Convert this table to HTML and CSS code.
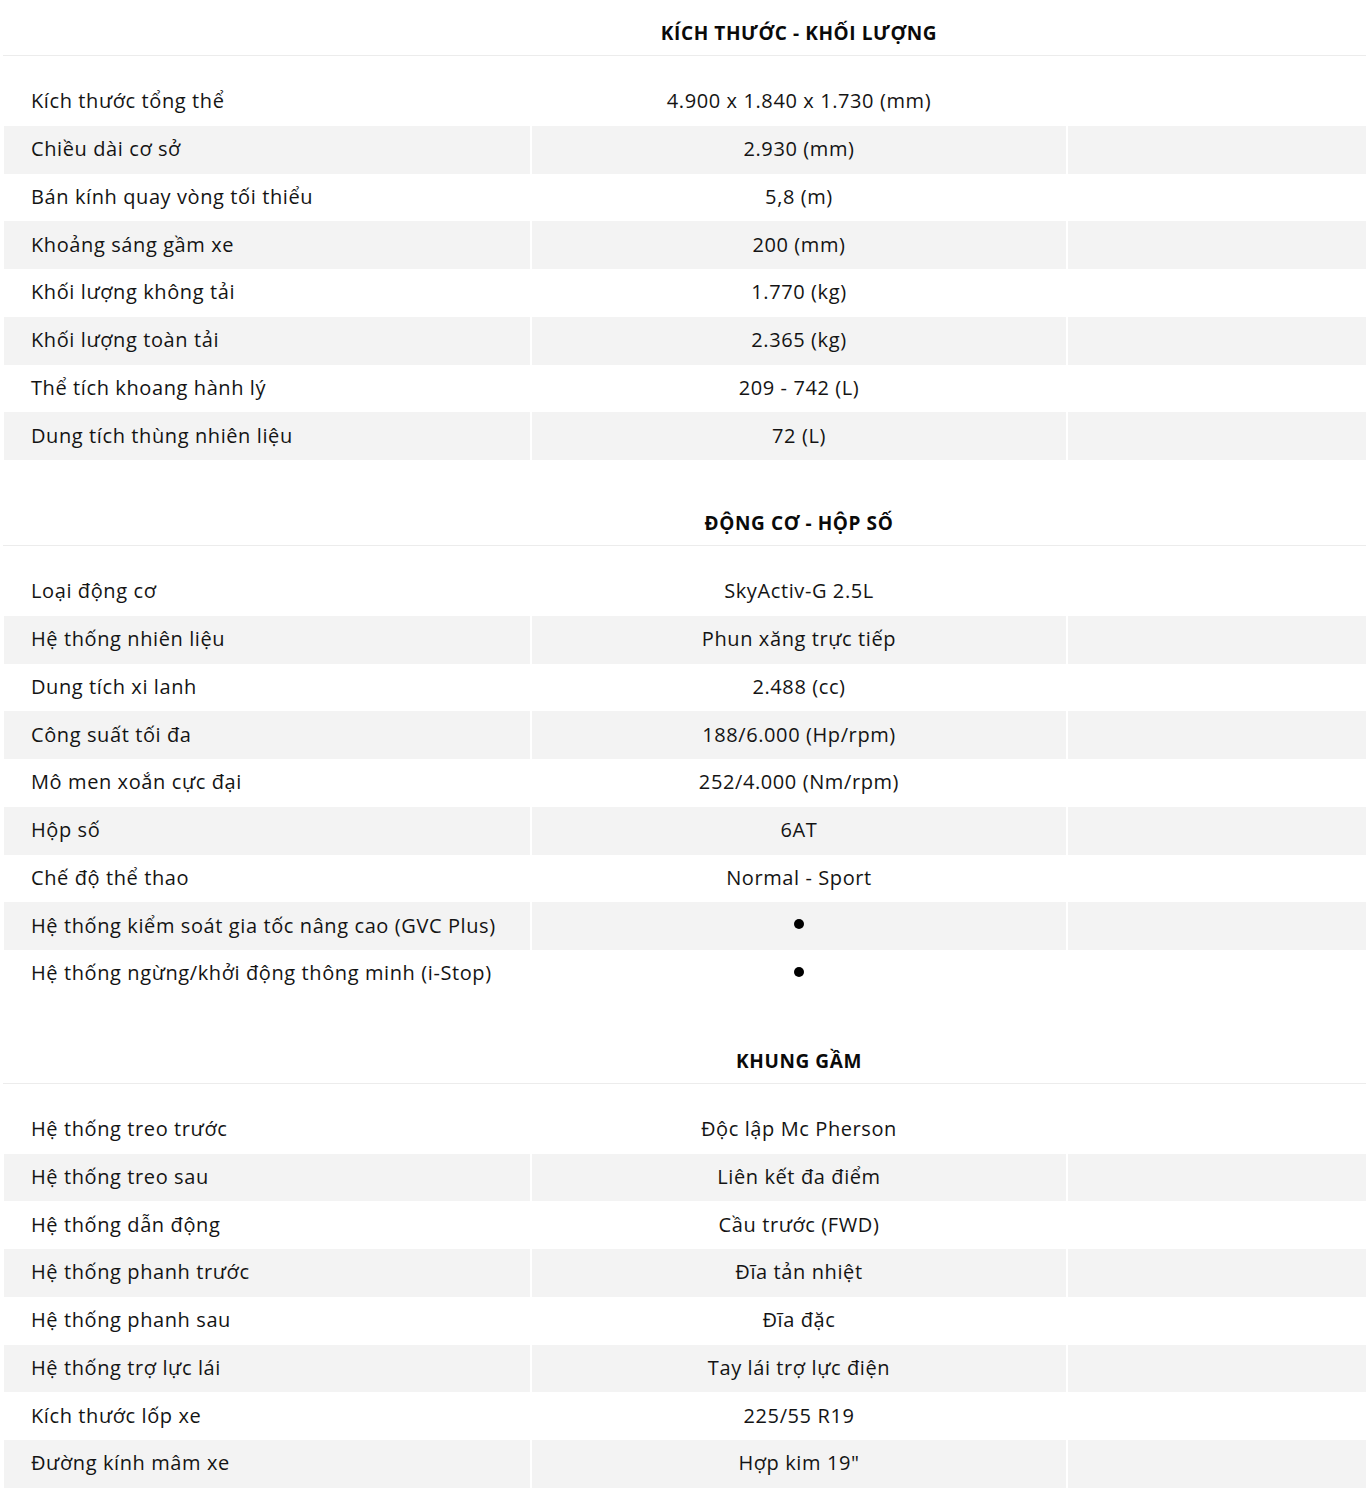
FILE: index.html
```html
<!DOCTYPE html>
<html lang="vi">
<head>
<meta charset="utf-8">
<title>Thông số kỹ thuật</title>
<link rel="stylesheet" href="styles.css">
</head>
<body>
<div class="specs">
  <section class="sec">
    <div class="sec-head"><div></div><h2>KÍCH THƯỚC - KHỐI LƯỢNG</h2><div></div></div>
    <div class="rows">
      <div class="row"><div class="c1">Kích thước tổng thể</div><div class="c2">4.900 x 1.840 x 1.730 (mm)</div><div class="c3"></div></div>
      <div class="row"><div class="c1">Chiều dài cơ sở</div><div class="c2">2.930 (mm)</div><div class="c3"></div></div>
      <div class="row"><div class="c1">Bán kính quay vòng tối thiểu</div><div class="c2">5,8 (m)</div><div class="c3"></div></div>
      <div class="row"><div class="c1">Khoảng sáng gầm xe</div><div class="c2">200 (mm)</div><div class="c3"></div></div>
      <div class="row"><div class="c1">Khối lượng không tải</div><div class="c2">1.770 (kg)</div><div class="c3"></div></div>
      <div class="row"><div class="c1">Khối lượng toàn tải</div><div class="c2">2.365 (kg)</div><div class="c3"></div></div>
      <div class="row"><div class="c1">Thể tích khoang hành lý</div><div class="c2">209 - 742 (L)</div><div class="c3"></div></div>
      <div class="row"><div class="c1">Dung tích thùng nhiên liệu</div><div class="c2">72 (L)</div><div class="c3"></div></div>
    </div>
  </section>

  <section class="sec">
    <div class="sec-head"><div></div><h2>ĐỘNG CƠ - HỘP SỐ</h2><div></div></div>
    <div class="rows">
      <div class="row"><div class="c1">Loại động cơ</div><div class="c2">SkyActiv-G 2.5L</div><div class="c3"></div></div>
      <div class="row"><div class="c1">Hệ thống nhiên liệu</div><div class="c2">Phun xăng trực tiếp</div><div class="c3"></div></div>
      <div class="row"><div class="c1">Dung tích xi lanh</div><div class="c2">2.488 (cc)</div><div class="c3"></div></div>
      <div class="row"><div class="c1">Công suất tối đa</div><div class="c2">188/6.000 (Hp/rpm)</div><div class="c3"></div></div>
      <div class="row"><div class="c1">Mô men xoắn cực đại</div><div class="c2">252/4.000 (Nm/rpm)</div><div class="c3"></div></div>
      <div class="row"><div class="c1">Hộp số</div><div class="c2">6AT</div><div class="c3"></div></div>
      <div class="row"><div class="c1">Chế độ thể thao</div><div class="c2">Normal - Sport</div><div class="c3"></div></div>
      <div class="row"><div class="c1">Hệ thống kiểm soát gia tốc nâng cao (GVC Plus)</div><div class="c2"><span class="dot"></span></div><div class="c3"></div></div>
      <div class="row"><div class="c1">Hệ thống ngừng/khởi động thông minh (i-Stop)</div><div class="c2"><span class="dot"></span></div><div class="c3"></div></div>
    </div>
  </section>

  <section class="sec">
    <div class="sec-head"><div></div><h2>KHUNG GẦM</h2><div></div></div>
    <div class="rows">
      <div class="row"><div class="c1">Hệ thống treo trước</div><div class="c2">Độc lập Mc Pherson</div><div class="c3"></div></div>
      <div class="row"><div class="c1">Hệ thống treo sau</div><div class="c2">Liên kết đa điểm</div><div class="c3"></div></div>
      <div class="row"><div class="c1">Hệ thống dẫn động</div><div class="c2">Cầu trước (FWD)</div><div class="c3"></div></div>
      <div class="row"><div class="c1">Hệ thống phanh trước</div><div class="c2">Đĩa tản nhiệt</div><div class="c3"></div></div>
      <div class="row"><div class="c1">Hệ thống phanh sau</div><div class="c2">Đĩa đặc</div><div class="c3"></div></div>
      <div class="row"><div class="c1">Hệ thống trợ lực lái</div><div class="c2">Tay lái trợ lực điện</div><div class="c3"></div></div>
      <div class="row"><div class="c1">Kích thước lốp xe</div><div class="c2">225/55 R19</div><div class="c3"></div></div>
      <div class="row"><div class="c1">Đường kính mâm xe</div><div class="c2">Hợp kim 19"</div><div class="c3"></div></div>
    </div>
  </section>
</div>
</body>
</html>
```

FILE: styles.css
```css
html, body {
  margin: 0;
  padding: 0;
  background: #ffffff;
}

body {
  font-family: "Open Sans", "Lato", "Liberation Sans", sans-serif;
  color: #141414;
}

.specs {
  padding-left: 4px;
  display: flex;
  flex-direction: column;
  gap: 30px;
}

.sec-head,
.row {
  display: grid;
  grid-template-columns: 526px 534px 1fr;
  column-gap: 2px;
}

.sec-head {
  height: 56px;
  border-bottom: 1px solid #ececec;
  box-sizing: border-box;
  margin-left: -1px;
  padding-left: 1px;
}

.sec-head h2 {
  margin: 0;
  padding-top: 21px;
  text-align: center;
  font-size: 19px;
  font-weight: 700;
  line-height: 24px;
  letter-spacing: 0.6px;
  color: #0a0a0a;
}

.rows {
  margin-top: 22px;
  display: flex;
  flex-direction: column;
}

.row {
  height: 47.75px;
  font-size: 20px;
  letter-spacing: 0.6px;
}

.row > div {
  display: flex;
  align-items: center;
  padding-bottom: 2px;
  box-sizing: border-box;
}

.row:nth-child(even) > div {
  background: #f3f3f3;
}

.c1 {
  padding-left: 27px;
}

.c2 {
  justify-content: center;
}

.dot {
  display: block;
  width: 10px;
  height: 10px;
  border-radius: 50%;
  background: #000;
  margin-top: -2px;
}
```
